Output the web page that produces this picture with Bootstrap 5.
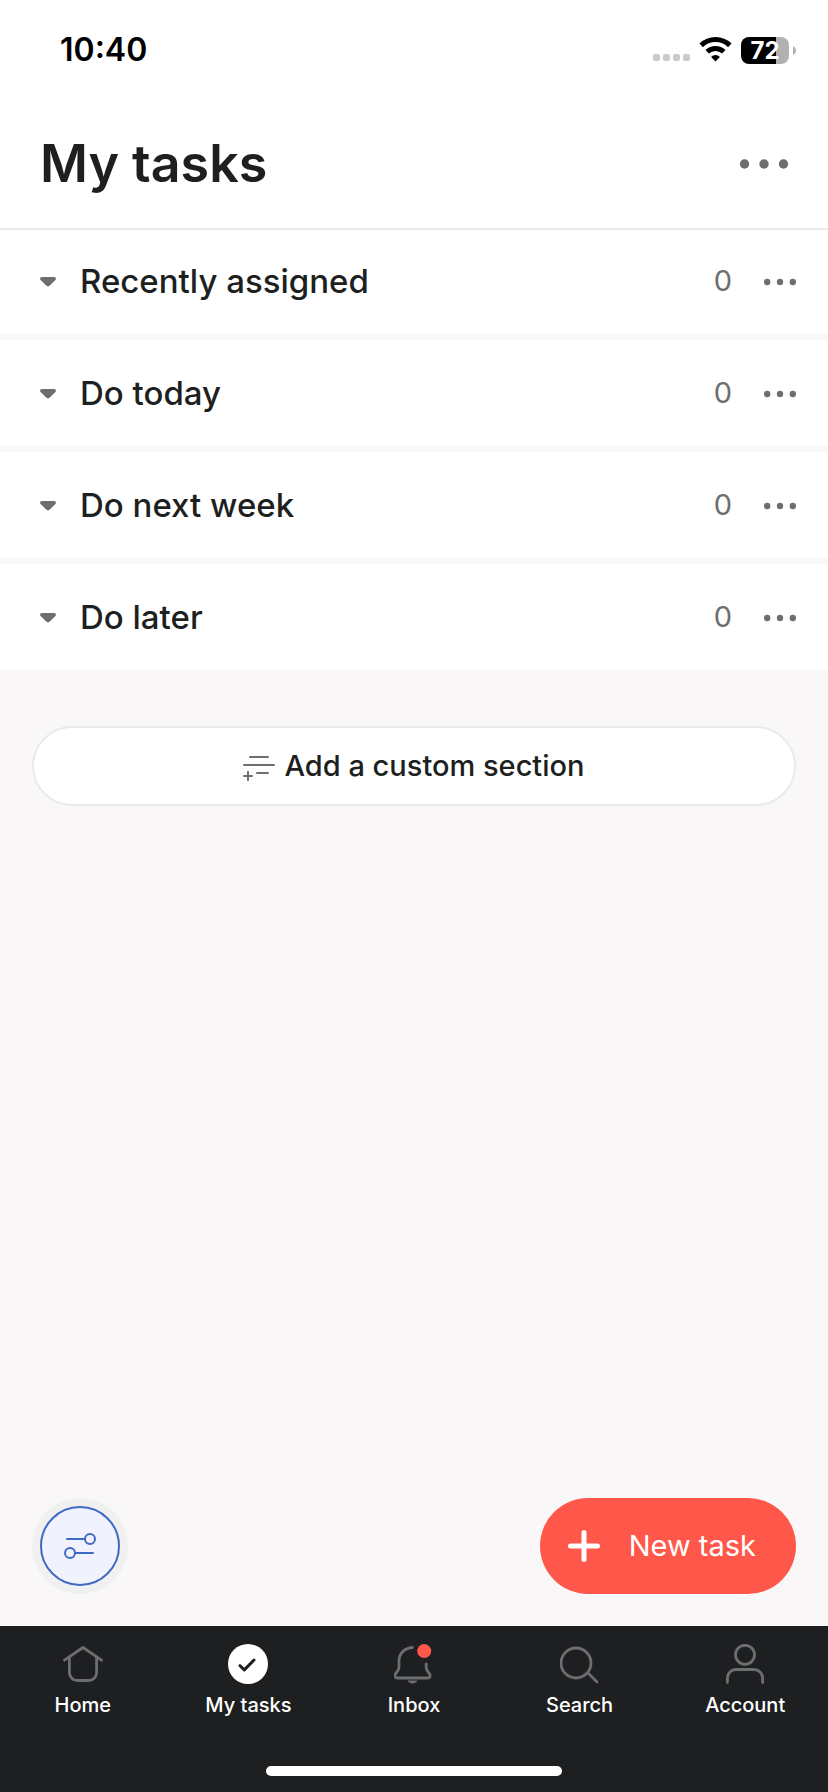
<!DOCTYPE html>
<html lang="en">
<head>
<meta charset="utf-8">
<meta name="viewport" content="width=device-width, initial-scale=1">
<title>My tasks</title>
<link href="https://cdn.jsdelivr.net/npm/bootstrap@5.3.0/dist/css/bootstrap.min.css" rel="stylesheet">
<style>
  :root { --ink: #1e1f21; --muted-ink: #6d6e6f; --canvas: #f9f7f8; --hairline: #ebeaea; --coral: #ff584a; --blue: #3f6ac4; }
  body { font-family: Inter, "Liberation Sans", sans-serif; color: var(--ink); background: var(--canvas); }
  svg { display: block; flex: none; }
  .plain-btn { border: 0; background: none; padding: 0; color: var(--muted-ink); }
  .status-bar { height: 100px; padding: 0 32px 0 60px; color: #000; }
  .clock { font-size: 32px; line-height: 40px; font-weight: 600; }
  .battery { width: 48px; height: 27px; border-radius: 8px; font-size: 24px; line-height: 27px; font-weight: 700; color: #fff; background: linear-gradient(90deg, #000 73%, #b1b1b1 73%); }
  .page-head { height: 128px; padding: 0 36px 0 40px; }
  .page-title { font-size: 52px; line-height: 64px; font-weight: 600; }
  .sections { gap: 6px; }
  .section-row { height: 106px; padding: 0 32px 0 40px; background: #fff; }
  .section-row:first-child { box-shadow: inset 0 2px var(--hairline); }
  .section-name { font-size: 33px; line-height: 40px; font-weight: 500; margin-left: 24px; }
  .section-count { font-size: 29px; line-height: 40px; font-weight: 400; color: var(--muted-ink); margin-right: 32px; }
  .add-section { height: 80px; margin: 56px 32px 0; border: 2px solid var(--hairline); background: #fff; font-size: 29px; line-height: 40px; font-weight: 500; gap: 9px; color: var(--ink); }
  .actions { padding: 32px; }
  .filter-btn { width: 96px; height: 96px; border: 0; padding: 8px; background: #f1f0f0; color: var(--blue); }
  .filter-disc { width: 80px; height: 80px; border: 2px solid var(--blue); background: #f1f2fd; }
  .new-task { height: 96px; border: 0; padding: 0 40px 0 28px; gap: 29px; background: var(--coral); color: #fff; font-size: 29px; line-height: 40px; font-weight: 400; }
  .tab-bar { background: var(--ink); height: 166px; }
  .tab-link { color: #fff; font-size: 20px; line-height: 28px; font-weight: 500; padding-top: 18px; gap: 7px; }
  .tab-link svg { color: #6d6e6f; }
  .home-bar { width: 296px; height: 10px; background: #fff; margin-bottom: 16px; }
</style>
</head>
<body>
<div class="d-flex flex-column min-vh-100">
  <header class="bg-white">
    <div class="status-bar d-flex align-items-center justify-content-between">
      <span class="clock">10:40</span>
      <div class="d-flex align-items-center">
        <svg width="38" height="27" viewBox="0 0 38 27" fill="#cacaca" aria-hidden="true"><rect y="17" width="7" height="7" rx="2"/><rect x="10" y="17" width="7" height="7" rx="2"/><rect x="20" y="17" width="7" height="7" rx="2"/><rect x="30" y="17" width="7" height="7" rx="2"/></svg>
        <svg class="ms-2 me-2" width="34" height="27" viewBox="0 0 34 27" aria-hidden="true"><g fill="none" stroke="#000" stroke-width="5"><path d="M2.200 8.400a20.500 20.500 0 0 1 28.600 0"/><path d="M8.200 14.800a12 12 0 0 1 16.600 0"/></g><path d="M16.500 24.400 12.100 19.900a6.300 6.300 0 0 1 8.800 0Z"/></svg>
        <span class="battery text-center">72</span>
        <svg class="ms-1" width="3" height="9" viewBox="0 0 3 9" fill="#b1b1b1" aria-hidden="true"><path d="M0 0c4 2 4 7 0 9Z"/></svg>
      </div>
    </div>
    <div class="page-head d-flex align-items-center justify-content-between">
      <h1 class="page-title m-0">My tasks</h1>
      <button class="plain-btn" type="button" aria-label="More options"><svg width="54" height="40" viewBox="0 0 54 40" fill="currentColor"><circle cx="6.500" cy="20" r="4.700"/><circle cx="26" cy="20" r="4.700"/><circle cx="45.500" cy="20" r="4.700"/></svg></button>
    </div>
  </header>

  <main class="flex-grow-1 d-flex flex-column">
    <div class="sections d-flex flex-column">
      <section class="section-row d-flex align-items-center">
        <button class="plain-btn" type="button" aria-label="Collapse Recently assigned"><svg width="16" height="12" viewBox="0 -2 16 12" fill="currentColor"><path d="M2 0h12c2 0 2.500 2 1.200 3.200L9.500 8.800c-1 .9-2 .9-3 0L.8 3.200C-.5 2 0 0 2 0Z"/></svg></button>
        <h2 class="section-name mb-0 me-auto">Recently assigned</h2>
        <span class="section-count">0</span>
        <button class="plain-btn" type="button" aria-label="Recently assigned options"><svg width="32" height="32" viewBox="0 0 32 32" fill="currentColor"><circle cx="3.200" cy="17" r="3.200"/><circle cx="16" cy="17" r="3.200"/><circle cx="28.800" cy="17" r="3.200"/></svg></button>
      </section>
      <section class="section-row d-flex align-items-center">
        <button class="plain-btn" type="button" aria-label="Collapse Do today"><svg width="16" height="12" viewBox="0 -2 16 12" fill="currentColor"><path d="M2 0h12c2 0 2.500 2 1.200 3.200L9.500 8.800c-1 .9-2 .9-3 0L.8 3.200C-.5 2 0 0 2 0Z"/></svg></button>
        <h2 class="section-name mb-0 me-auto">Do today</h2>
        <span class="section-count">0</span>
        <button class="plain-btn" type="button" aria-label="Do today options"><svg width="32" height="32" viewBox="0 0 32 32" fill="currentColor"><circle cx="3.200" cy="17" r="3.200"/><circle cx="16" cy="17" r="3.200"/><circle cx="28.800" cy="17" r="3.200"/></svg></button>
      </section>
      <section class="section-row d-flex align-items-center">
        <button class="plain-btn" type="button" aria-label="Collapse Do next week"><svg width="16" height="12" viewBox="0 -2 16 12" fill="currentColor"><path d="M2 0h12c2 0 2.500 2 1.200 3.200L9.500 8.800c-1 .9-2 .9-3 0L.8 3.200C-.5 2 0 0 2 0Z"/></svg></button>
        <h2 class="section-name mb-0 me-auto">Do next week</h2>
        <span class="section-count">0</span>
        <button class="plain-btn" type="button" aria-label="Do next week options"><svg width="32" height="32" viewBox="0 0 32 32" fill="currentColor"><circle cx="3.200" cy="17" r="3.200"/><circle cx="16" cy="17" r="3.200"/><circle cx="28.800" cy="17" r="3.200"/></svg></button>
      </section>
      <section class="section-row d-flex align-items-center">
        <button class="plain-btn" type="button" aria-label="Collapse Do later"><svg width="16" height="12" viewBox="0 -2 16 12" fill="currentColor"><path d="M2 0h12c2 0 2.500 2 1.200 3.200L9.500 8.800c-1 .9-2 .9-3 0L.8 3.200C-.5 2 0 0 2 0Z"/></svg></button>
        <h2 class="section-name mb-0 me-auto">Do later</h2>
        <span class="section-count">0</span>
        <button class="plain-btn" type="button" aria-label="Do later options"><svg width="32" height="32" viewBox="0 0 32 32" fill="currentColor"><circle cx="3.200" cy="17" r="3.200"/><circle cx="16" cy="17" r="3.200"/><circle cx="28.800" cy="17" r="3.200"/></svg></button>
      </section>
    </div>

    <button class="add-section d-flex align-items-center justify-content-center rounded-pill" type="button">
      <svg width="32" height="30" viewBox="0 -4 32 30" fill="none" stroke="#6d6e6f" stroke-width="2" stroke-linecap="round" aria-hidden="true"><path d="M7 2h18M1 10h30M14 18h11M1 21h8M5 17v8"/></svg>
      Add a custom section
    </button>

    <div class="actions mt-auto d-flex align-items-center justify-content-between">
      <button class="filter-btn rounded-circle" type="button" aria-label="Filter and sort">
        <span class="filter-disc rounded-circle d-flex align-items-center justify-content-center">
          <svg width="32" height="26" viewBox="0 0 32 26" fill="none" stroke="currentColor" stroke-width="2" stroke-linecap="round"><path d="M3 6h17M12 20h17"/><circle cx="26" cy="6" r="5"/><circle cx="6" cy="20" r="5"/></svg>
        </span>
      </button>
      <button class="new-task d-flex align-items-center rounded-pill" type="button">
        <svg width="32" height="32" viewBox="0 0 32 32" fill="none" stroke="#fff" stroke-width="5" stroke-linecap="round" aria-hidden="true"><path d="M2.500 16h27M16 2.500v27"/></svg>
        New task
      </button>
    </div>
  </main>

  <nav class="tab-bar d-flex flex-column justify-content-between" aria-label="Main">
    <div class="row g-0">
      <a class="col tab-link d-flex flex-column align-items-center text-decoration-none" href="#home">
        <svg width="40" height="40" viewBox="0 0 40 40" fill="none" stroke="currentColor" stroke-width="2.800" stroke-linecap="round" stroke-linejoin="round" aria-hidden="true"><path d="M1.500 16.200 20 3.500l18.500 12.700M6.400 14v14.500a8 8 0 0 0 8 8h11.200a8 8 0 0 0 8-8V14"/></svg>
        Home
      </a>
      <a class="col tab-link d-flex flex-column align-items-center text-decoration-none" href="#tasks" aria-current="page">
        <svg width="40" height="40" viewBox="0 0 40 40" fill="none" stroke-linecap="round" stroke-linejoin="round" aria-hidden="true"><circle cx="20" cy="20" r="20" fill="#fff"/><path d="m12 21.700 4.300 4.200L26 16" stroke="#1e1f21" stroke-width="3"/></svg>
        My tasks
      </a>
      <a class="col tab-link d-flex flex-column align-items-center text-decoration-none" href="#inbox">
        <svg width="40" height="40" viewBox="0 0 40 40" fill="none" stroke="currentColor" stroke-width="2.800" stroke-linecap="round" stroke-linejoin="round" aria-hidden="true"><path d="M18.500 3.500C10 4 5 10 5 17v6.500c0 2-1 3.300-2.500 5-2.700 3-1.700 5.500 1 5.500h30c2.700 0 3.700-2.500 1-5.500-1.500-1.700-2.300-3-2.300-5V20"/><path d="M13.500 36.500h10c-2 4-8 4-10 0Z" fill="currentColor" stroke="none"/><circle cx="30.200" cy="7.100" r="7" fill="#ff584a" stroke="none"/></svg>
        Inbox
      </a>
      <a class="col tab-link d-flex flex-column align-items-center text-decoration-none" href="#search">
        <svg width="40" height="40" viewBox="0 0 40 40" fill="none" stroke="currentColor" stroke-width="2.800" stroke-linecap="round" aria-hidden="true"><circle cx="16" cy="19" r="15"/><path d="m28 29 9 9"/></svg>
        Search
      </a>
      <a class="col tab-link d-flex flex-column align-items-center text-decoration-none" href="#account">
        <svg width="40" height="40" viewBox="0 0 40 40" fill="none" stroke="currentColor" stroke-width="2.800" stroke-linecap="round" aria-hidden="true"><circle cx="20" cy="10.800" r="9.500"/><path d="M2.400 38.500V34a8.500 8.500 0 0 1 8.500-8.500h18.200a8.500 8.500 0 0 1 8.500 8.500v4.500"/></svg>
        Account
      </a>
    </div>
    <div class="home-bar rounded-pill align-self-center"></div>
  </nav>
</div>
<script src="https://cdn.jsdelivr.net/npm/bootstrap@5.3.0/dist/js/bootstrap.bundle.min.js"></script>
</body>
</html>
